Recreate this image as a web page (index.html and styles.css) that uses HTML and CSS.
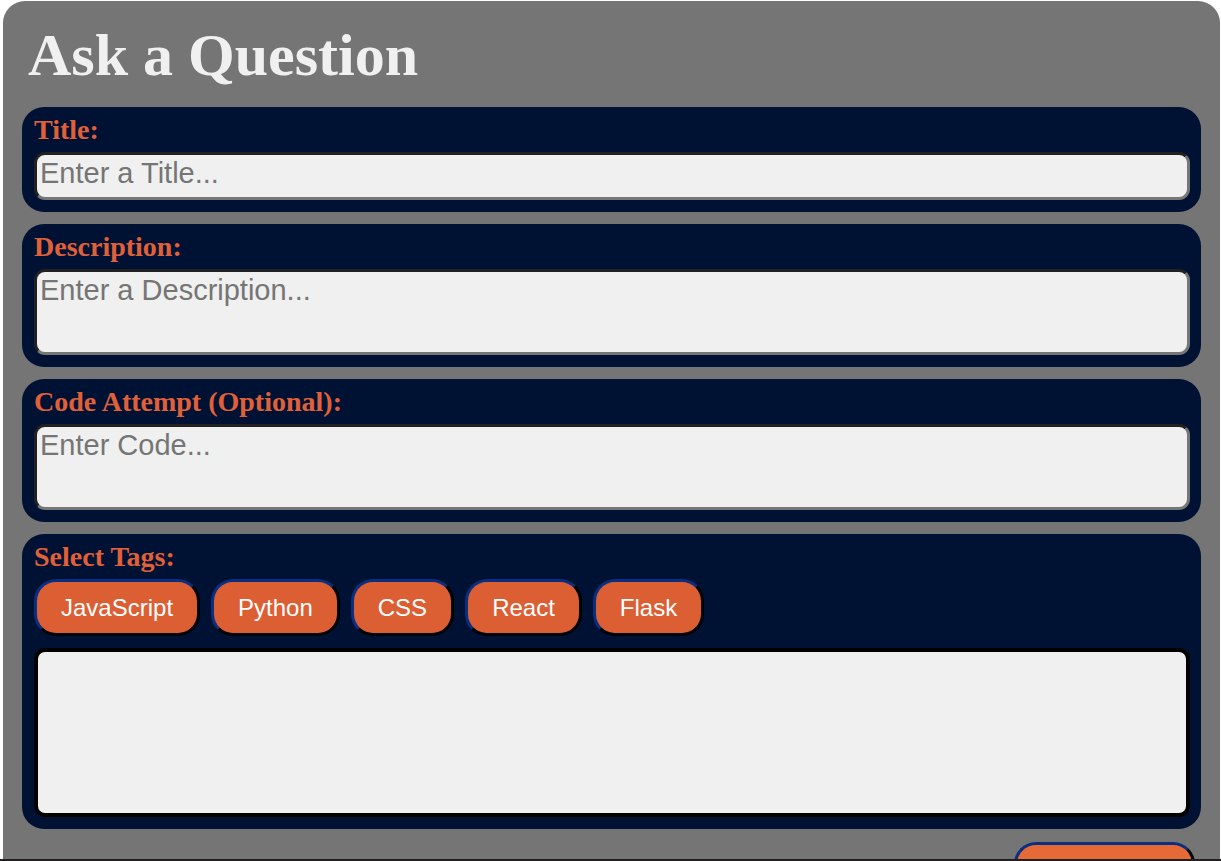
FILE: index.html
```html
<!DOCTYPE html>
<html lang="en">
<head>
<meta charset="utf-8">
<title>Ask a Question</title>
<link rel="stylesheet" href="styles.css">
</head>
<body>
<div class="viewport">
  <form class="panel">
    <h1 class="heading">Ask a Question</h1>
    <div class="card">
      <label class="label" for="title">Title:</label>
      <textarea class="field field-short" id="title" placeholder="Enter a Title..."></textarea>
    </div>
    <div class="card">
      <label class="label" for="description">Description:</label>
      <textarea class="field" id="description" placeholder="Enter a Description..."></textarea>
    </div>
    <div class="card">
      <label class="label" for="code">Code Attempt (Optional):</label>
      <textarea class="field" id="code" placeholder="Enter Code..."></textarea>
    </div>
    <div class="card">
      <span class="label" id="tags-label">Select Tags:</span>
      <div class="tags" role="group" aria-labelledby="tags-label">
        <button class="button" type="button">JavaScript</button>
        <button class="button" type="button">Python</button>
        <button class="button" type="button">CSS</button>
        <button class="button" type="button">React</button>
        <button class="button" type="button">Flask</button>
      </div>
      <div class="selected"></div>
    </div>
    <button class="button submit" type="submit" aria-label="Submit"></button>
  </form>
</div>
</body>
</html>
```

FILE: styles.css
```css
* {
  box-sizing: border-box;
}

body {
  margin: 0;
  background: #fff;
  font-family: "Liberation Serif", "Times New Roman", serif;
}

.viewport {
  height: 100vh;
  overflow: hidden;
  padding: 1px 1px 0 3px;
  border-bottom: 2px solid #231f20;
}

.panel {
  display: flex;
  flex-direction: column;
  gap: 12px;
  padding: 20px 19px;
  border-radius: 22px;
  background: #757575;
}

.heading {
  margin: 0 6px 6px;
  color: #f0f0f0;
  font-size: 60px;
  line-height: 68px;
}

.card {
  display: flex;
  flex-direction: column;
  padding: 6px 11px 12px 12px;
  border-radius: 22px;
  background: #001233;
}

.label {
  margin-bottom: 6px;
  color: #e0603a;
  font-size: 28px;
  font-weight: bold;
  line-height: 33px;
}

.field {
  display: block;
  width: 100%;
  height: 86px;
  padding: 2px 3px;
  border: 3px solid;
  border-color: #212121 #767676 #767676 #212121;
  border-radius: 11px;
  background: #f0f0f0;
  color: #222;
  font-family: "Liberation Sans", Arial, sans-serif;
  font-size: 29px;
  line-height: 32px;
  resize: none;
  overflow: hidden;
}

.field-short {
  height: 48px;
}

.field::placeholder {
  color: #757575;
}

.tags {
  display: flex;
  flex-wrap: wrap;
  gap: 11px;
  margin-bottom: 12px;
}

.button {
  height: 57px;
  padding: 0 24px;
  border: 3px solid;
  border-color: #0a2f80 #000 #000 #0a2f80;
  border-radius: 22px;
  background: #dc5e33;
  color: #fff;
  font-family: "Liberation Sans", Arial, sans-serif;
  font-size: 24px;
}

.selected {
  height: 169px;
  border: 4px solid #000;
  border-radius: 11px;
  background: #f0f0f0;
}

.submit {
  align-self: flex-end;
  width: 181px;
  margin: 1px 6px 0 0;
  background: #e66a38;
}
```
